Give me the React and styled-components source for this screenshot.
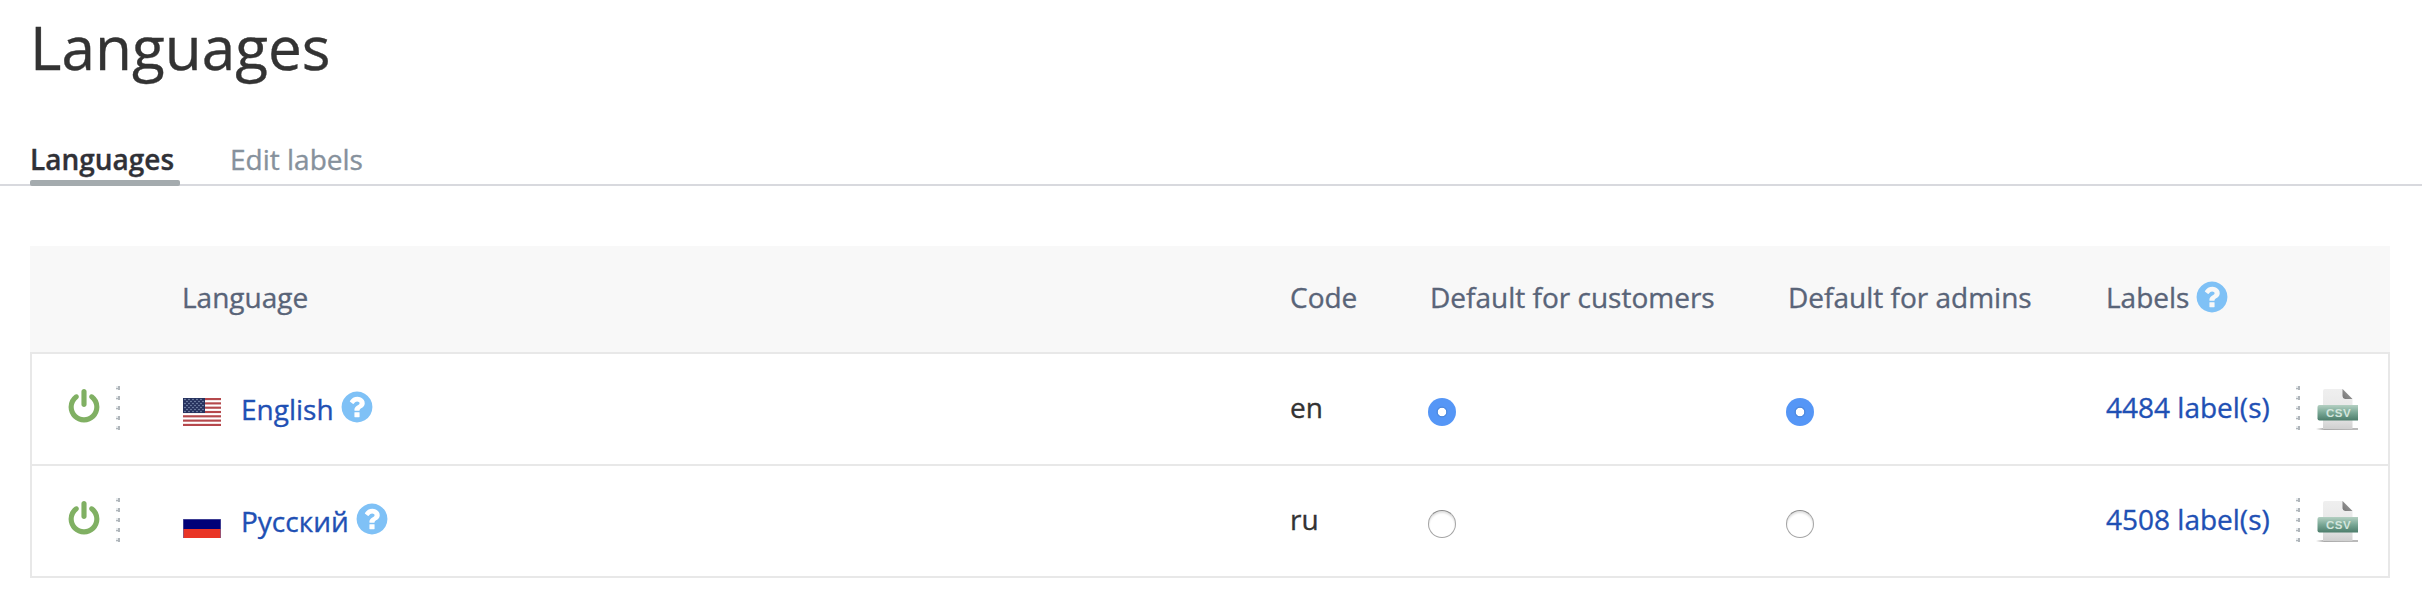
import React, { useState } from 'react';
import styled, { createGlobalStyle } from 'styled-components';

const GlobalStyle = createGlobalStyle`
  * { box-sizing: border-box; }
  body {
    margin: 0;
    background: #fff;
    color: #333;
    font-family: "Open Sans", "Noto Sans", sans-serif;
    font-size: 28px;
    -webkit-text-stroke: 0.35px currentColor;
  }
`;

const Page = styled.div`
  display: flex;
  flex-direction: column;
  min-height: 612px;
`;

const Title = styled.h1`
  margin: 0;
  padding: 6px 0 0 30px;
  height: 134px;
  font-size: 60.3px;
  line-height: 82px;
  font-weight: 400;
`;

const Tabs = styled.nav`
  display: flex;
  gap: 50px;
  height: 52px;
  padding-left: 30px;
  border-bottom: 2px solid #d8d9de;
`;

const Tab = styled.a`
  display: flex;
  flex-direction: column;
  height: 52px;
  min-width: ${(p) => (p.$active ? '150px' : 'auto')};
  line-height: 50px;
  font-weight: ${(p) => (p.$active ? 600 : 400)};
  color: ${(p) => (p.$active ? '#303137' : '#86919c')};
  white-space: nowrap;
  &::after {
    content: '';
    flex: none;
    height: 6px;
    margin-top: -4px;
    border-radius: 2px;
    background: ${(p) => (p.$active ? '#a4abae' : 'transparent')};
  }
`;

const Table = styled.div`
  width: 2360px;
  margin: 60px 0 0 30px;
`;

const Row = styled.div`
  display: grid;
  grid-template-columns: 150px 1108px 140px 358px 318px 1fr;
  height: ${(p) => (p.$head ? '106px' : '112px')};
  border: 2px solid ${(p) => (p.$head ? '#f8f8f8' : '#e8e8e8')};
  border-top: 0;
  ${(p) => (p.$head ? 'background: #f8f8f8; color: #596478; border-bottom: 0;' : '')}
`;

const Body = styled.div`
  border-top: 2px solid #e8e8e8;
`;

const Cell = styled.div`
  display: flex;
  align-items: center;
  white-space: nowrap;
  padding-bottom: ${(p) => p.$lift || 0}px;
`;

const Actions = styled(Cell)`
  padding-left: 34px;
  gap: 14px;
`;

const Link = styled.a`
  color: #1f50b4;
  text-decoration: none;
`;

const Name = styled(Link)`
  margin-left: 20px;
`;

const Icon = styled.svg`
  display: block;
  flex: none;
  width: 36px;
  height: 36px;
  margin-bottom: ${(p) => p.$lift || 0}px;
  fill: ${(p) => p.$color};
`;

const HelpIcon = styled(Icon)`
  margin-left: 5px;
`;

const Grip = styled.svg`
  display: block;
  flex: none;
  width: 4px;
  height: 44px;
`;

const Flag = styled.svg`
  display: block;
  flex: none;
  width: 38px;
  height: 28px;
  margin: 6px 0 0 1px;
`;

const Radio = styled.input`
  appearance: none;
  width: 28px;
  height: 28px;
  margin: 6px 0 0 -2px;
  border: 1px solid #a5a5a5;
  border-top-color: #8c8c8c;
  border-radius: 50%;
  background: #fff;
  box-shadow: inset 0 2px 2px rgba(0, 0, 0, 0.12);
  &:checked {
    border: 0;
    box-shadow: none;
    background: radial-gradient(circle at 50% 50%, #fff 3.8px, #4a86dc 4.6px, #5596f6 6px);
  }
`;

const Export = styled.div`
  display: flex;
  align-items: center;
  gap: 16px;
  margin-top: 2px;
  margin-left: auto;
  margin-right: 30px;
`;

const CsvSvg = styled.svg`
  display: block;
  width: 42px;
  height: 44px;
`;

function Help({ lift }) {
  return (
    <HelpIcon viewBox="0 0 1792 1792" $color="#7fc1f6" $lift={lift}>
      <path d="M1024 1376v-192q0-14-9-23t-23-9h-192q-14 0-23 9t-9 23v192q0 14 9 23t23 9h192q14 0 23-9t9-23zm256-672q0-88-55.5-163t-138.5-116-170-41q-243 0-371 213-15 24 8 42l132 100q7 6 19 6 16 0 25-12 53-68 86-92 34-24 86-24 48 0 85.5 26t37.5 59q0 38-20 61t-68 45q-63 28-115.5 86.5t-52.5 125.5v36q0 14 9 23t23 9h192q14 0 23-9t9-23q0-19 21.5-49.5t54.5-49.5q32-18 49-28.5t46-35 44.5-48 28-60.5 12.5-81zm384 192q0 209-103 385.5t-279.5 279.5-385.5 103-385.5-103-279.5-279.5-103-385.5 103-385.5 279.5-279.5 385.5-103 385.5 103 279.5 279.5 103 385.5z" />
    </HelpIcon>
  );
}

function Power() {
  return (
    <Icon viewBox="0 0 1792 1792" $color="#80b063" $lift={2}>
      <path d="M1664 896q0 156-61 298t-164 245-245 164-298 61-298-61-245-164-164-245-61-298q0-182 80.5-343t226.5-270q43-32 95.5-25t83.5 50q32 42 24.5 94.5t-49.5 84.5q-98 74-151.5 181t-53.5 228q0 104 40.5 198.5t109.5 163.5 163.5 109.5 198.5 40.5 198.5-40.5 163.5-109.5 109.5-163.5 40.5-198.5q0-121-53.5-228t-151.5-181q-42-32-49.5-84.5t24.5-94.5q31-43 84-50t95 25q146 109 226.5 270t80.5 343zm-640-768v640q0 52-38 90t-90 38-90-38-38-90v-640q0-52 38-90t90-38 90 38 38 90z" />
    </Icon>
  );
}

function GripDots() {
  return (
    <Grip viewBox="0 0 4 44">
      {[0, 10, 20, 30, 40].map((y) => (
        <g key={y} transform={`translate(0 ${y})`}>
          <rect width="4" height="4" fill="#e6eaec" />
          <path d="M4 0V4H2V3H0V2H2V0Z" fill="#b0b6bb" />
        </g>
      ))}
    </Grip>
  );
}

function UsFlag() {
  const h = 28 / 13;
  return (
    <Flag viewBox="0 0 38 28">
      <rect width="38" height="28" fill="#fff" />
      {[0, 2, 4, 6, 8, 10, 12].map((i) => (
        <rect key={i} y={i * h} width="38" height={h} fill="#b5484c" />
      ))}
      <rect width="22" height="15" fill="#26325e" />
      {[0, 1, 2, 3, 4, 5, 6].map((r) =>
        [0, 1, 2, 3, 4].map((c) => (
          <circle key={`${r}-${c}`} cx={2 + c * 4 + (r % 2) * 2} cy={1.5 + r * 2} r="0.65" fill="#9aaccb" />
        ))
      )}
    </Flag>
  );
}

function RuFlag() {
  return (
    <Flag viewBox="0 0 38 28">
      <rect width="38" height="9" fill="#fff" />
      <rect y="9" width="38" height="10" fill="#000078" />
      <rect y="19" width="38" height="9" fill="#e93526" />
      <path d="M0.5 9V28M37.5 9V28M0 9.5H38" stroke="#6666a5" strokeOpacity="0.6" fill="none" />
    </Flag>
  );
}

function CsvIcon() {
  return (
    <CsvSvg viewBox="0 0 42 44">
      <defs>
        <linearGradient id="csv-page" x1="0" y1="0" x2="0" y2="1">
          <stop offset="0" stopColor="#efefef" />
          <stop offset="0.7" stopColor="#e6e6e6" />
          <stop offset="1" stopColor="#cfcfcf" />
        </linearGradient>
        <linearGradient id="csv-band" x1="0" y1="0" x2="0" y2="1">
          <stop offset="0" stopColor="#b4d0c2" />
          <stop offset="0.5" stopColor="#78a694" />
          <stop offset="1" stopColor="#4c7d6b" />
        </linearGradient>
        <linearGradient id="csv-fold" x1="0" y1="1" x2="1" y2="0">
          <stop offset="0" stopColor="#777" />
          <stop offset="0.5" stopColor="#8c8c8c" />
          <stop offset="0.65" stopColor="#ddd" />
        </linearGradient>
        <linearGradient id="csv-shadow" x1="0" y1="0" x2="1" y2="0">
          <stop offset="0" stopColor="#aaa" stopOpacity="0" />
          <stop offset="0.2" stopColor="#aaa" />
          <stop offset="1" stopColor="#bbb" />
        </linearGradient>
      </defs>
      <rect y="42" width="42" height="2" fill="url(#csv-shadow)" />
      <path d="M7 5Q7 3 9 3H27L36.5 13V43H7Z" fill="url(#csv-page)" />
      <path d="M26.5 3L36.5 13H29Q26.5 12.5 26.5 10Z" fill="url(#csv-fold)" />
      <rect x="1.5" y="19" width="42" height="15.5" rx="2" fill="url(#csv-band)" />
      <text x="22.5" y="31" textAnchor="middle" fontFamily="Liberation Sans, sans-serif" fontSize="11.5" fontWeight="700" letterSpacing="0.5" fill="#d3e5dc">CSV</text>
    </CsvSvg>
  );
}

const languages = [
  { code: 'en', name: 'English', labels: 4484, FlagIcon: UsFlag },
  { code: 'ru', name: 'Русский', labels: 4508, FlagIcon: RuFlag },
];

export default function App() {
  const [customer, setCustomer] = useState('en');
  const [admin, setAdmin] = useState('en');
  return (
    <Page>
      <GlobalStyle />
      <Title>Languages</Title>
      <Tabs>
        <Tab $active>Languages</Tab>
        <Tab>Edit labels</Tab>
      </Tabs>
      <Table>
        <Row $head>
          <Cell />
          <Cell $lift={4}>Language</Cell>
          <Cell $lift={4}>Code</Cell>
          <Cell $lift={4}>Default for customers</Cell>
          <Cell $lift={4}>Default for admins</Cell>
          <Cell $lift={4}>
            Labels
            <Help />
          </Cell>
        </Row>
        <Body>
          {languages.map(({ code, name, labels, FlagIcon }) => (
            <Row key={code}>
              <Actions $lift={2}>
                <Power />
                <GripDots />
              </Actions>
              <Cell>
                <FlagIcon />
                <Name>{name}</Name>
                <Help lift={4} />
              </Cell>
              <Cell $lift={4}>{code}</Cell>
              <Cell>
                <Radio type="radio" name="customer" checked={customer === code} onChange={() => setCustomer(code)} />
              </Cell>
              <Cell>
                <Radio type="radio" name="admin" checked={admin === code} onChange={() => setAdmin(code)} />
              </Cell>
              <Cell $lift={4}>
                <Link>{labels} label(s)</Link>
                <Export>
                  <GripDots />
                  <CsvIcon />
                </Export>
              </Cell>
            </Row>
          ))}
        </Body>
      </Table>
    </Page>
  );
}
